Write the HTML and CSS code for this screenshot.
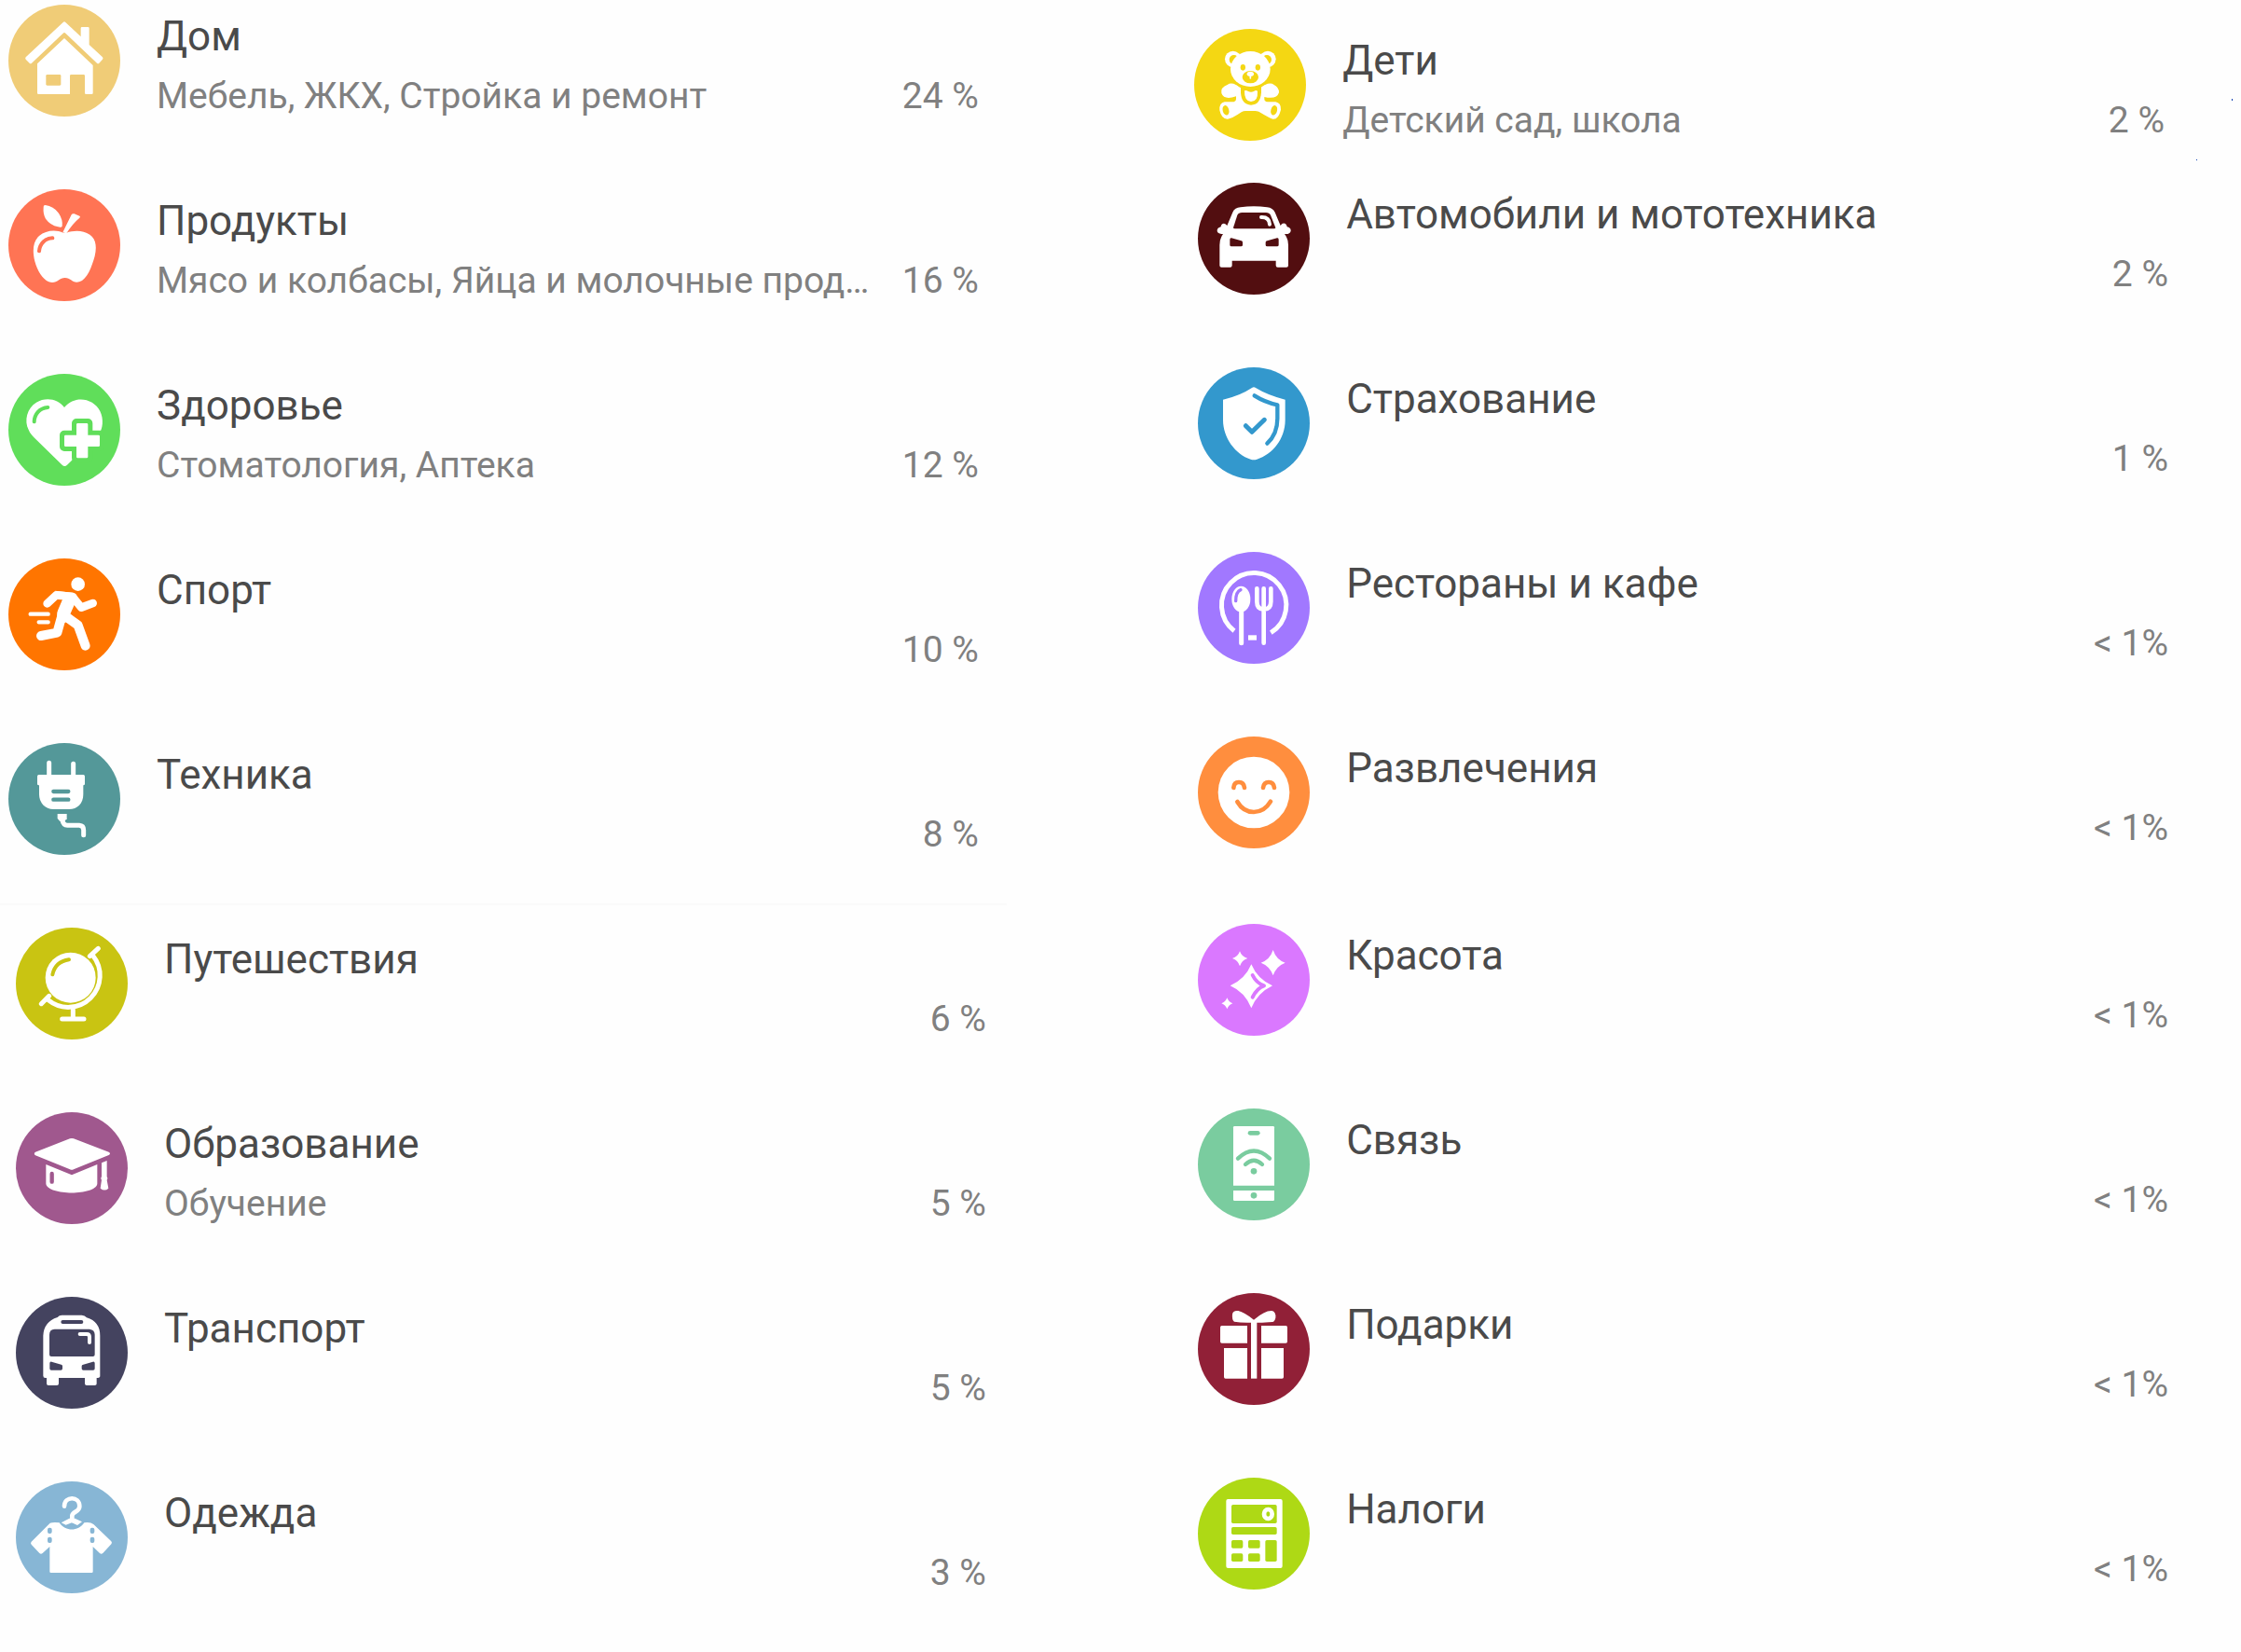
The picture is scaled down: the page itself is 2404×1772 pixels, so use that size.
FILE: index.html
```html
<!DOCTYPE html>
<html lang="ru">
<head>
    <meta charset="UTF-8">
    <meta name="viewport" content="width=device-width, initial-scale=1.0">
    <title>Категории расходов</title>
    <link rel="stylesheet" href="styles.css">
</head>
<body>
    <main class="page">
        <!-- Left column -->
        <div class="column">
            <ul class="group">
                <li class="row">
                    <svg class="icon home" viewBox="0 0 360 360" aria-hidden="true">
                        <path d="M176 57Q180 53 184 57L233 103V76q0-4 4-4h19q4 0 4 4v53L303 169Q306 173 303 176L292 188Q289 191 285 188L184 92Q180 88 176 92L75 188Q71 191 68 188L56 176Q53 173 56 169z"/>
                        <path d="M180 108L272 195V284q0 4-4 4H250q-4 0-4-4V229q0-4-4-4H202q-4 0-4 4V288H97q-4 0-4-4V190z"/>
                        <rect class="cut" x="121" y="225" width="48" height="35" rx="4"/>
                    </svg>
                    <div class="text">
                        <h2 class="title">Дом</h2>
                        <p class="sub">Мебель, ЖКХ, Стройка и ремонт</p>
                    </div>
                    <span class="percent">24 %</span>
                </li>
                <li class="row">
                    <svg class="icon food" viewBox="0 0 360 360" aria-hidden="true">
                        <path d="M177 140C150 128 118 134 100 149C78 168 77 200 85 232C93 262 110 290 130 298C156 306 162 285 182 285C202 285 205 303 228 298C254 290 268 250 278 215C285 185 282 160 262 146C240 131 210 132 187 140z"/>
                        <path d="M175 139L203 82Q206 77 212 79L229 86Q233 88 229 92Q205 112 187 142z"/>
                        <path d="M113 57Q112 51 119 51Q145 54 162 77Q176 98 173 119Q171 124 160 121Q135 116 120 95Q111 80 113 57z"/>
                        <path class="cut-line" stroke-width="12" d="M99 199C101 175 118 158 142 157"/>
                    </svg>
                    <div class="text">
                        <h2 class="title">Продукты</h2>
                        <p class="sub">Мясо и колбасы, Яйца и молочные прод…</p>
                    </div>
                    <span class="percent">16 %</span>
                </li>
                <li class="row">
                    <svg class="icon health" viewBox="0 0 360 360" aria-hidden="true">
                        <path d="M180 108C160 80 120 74 90 92C60 110 50 150 65 180C70 192 76 198 84 206L173 293Q181 301 189 293L290 195C305 178 307 145 295 120C275 80 215 66 180 108z"/>
                        <path class="cut" stroke="currentColor" stroke-width="30" stroke-linejoin="round" d="M219 159h37v38h38v37h-38v37h-37v-37h-39v-37h39z"/>
                        <path d="M223 159h29q4 0 4 4v34h34q4 0 4 4v29q0 4-4 4h-34v33q0 4-4 4h-29q-4 0-4-4v-33h-35q-4 0-4-4v-29q0-4 4-4h35v-34q0-4 4-4z"/>
                        <path class="cut-line" stroke-width="12" d="M83 154C84 130 100 110 127 108"/>
                    </svg>
                    <div class="text">
                        <h2 class="title">Здоровье</h2>
                        <p class="sub">Стоматология, Аптека</p>
                    </div>
                    <span class="percent">12 %</span>
                </li>
                <li class="row">
                    <svg class="icon sport" viewBox="0 0 360 360" aria-hidden="true">
                        <circle cx="224" cy="83" r="22"/>
                        <path d="M150 104L208 110Q218 112 222 122L212 150L199 179L212 190L180 208L160 196Q153 180 160 165L175 130z"/>
                        <path class="line" stroke-width="26" d="M125 145L154 118L206 123L235 158L272 144"/>
                        <path class="line" stroke-width="30" d="M172 185L157 239L105 249"/>
                        <path class="line" stroke-width="30" d="M178 182L224 215L248 281"/>
                        <path class="line" stroke-width="13" d="M71 179H128M98 205H128"/>
                    </svg>
                    <div class="text">
                        <h2 class="title">Спорт</h2>
                    </div>
                    <span class="percent">10 %</span>
                </li>
                <li class="row">
                    <svg class="icon tech" viewBox="0 0 360 360" aria-hidden="true">
                        <path class="line" stroke-width="15" d="M131 64V108M209 67V108"/>
                        <rect x="93" y="102" width="153" height="34" rx="5"/>
                        <path d="M99 130H241V165C241 195 222 213 195 213H145C118 213 99 192 99 165z"/>
                        <path class="cut-line" stroke-width="13" d="M145 156H193M145 182H193"/>
                        <path d="M158 228h30v16l-8 8h-14l-8-9z"/>
                        <path class="line" stroke-width="15" d="M173 245C175 258 180 265 190 265H228Q242 266 242 280V296"/>
                    </svg>
                    <div class="text">
                        <h2 class="title">Техника</h2>
                    </div>
                    <span class="percent">8 %</span>
                </li>
            </ul>
            <ul class="group group-second">
                <li class="row">
                    <svg class="icon travel" viewBox="0 0 360 360" aria-hidden="true">
                        <circle cx="176" cy="161" r="81"/>
                        <path class="cut-line" stroke-width="12" d="M118 151C124 124 144 107 171 103"/>
                        <path class="line" stroke-width="15" d="M248 90A102 102 0 0 1 104 233"/>
                        <path class="line" stroke-width="15" d="M238 92L265 67M82 245L107 220"/>
                        <path class="line" stroke-width="15" d="M184 265V290M149 294H219"/>
                    </svg>
                    <div class="text">
                        <h2 class="title">Путешествия</h2>
                    </div>
                    <span class="percent">6 %</span>
                </li>
                <li class="row">
                    <svg class="icon study" viewBox="0 0 360 360" aria-hidden="true">
                        <path d="M174 85Q180 83 186 85L299 128Q307 133 299 138L186 184Q180 187 174 184L63 139Q56 133 63 128z"/>
                        <path d="M97 168L180 202L262 168V230C258 269 102 269 97 230z"/>
                        <path class="cut-line" stroke-width="13" d="M116 198V224"/>
                        <path d="M276 163L293 156V208q4 5 0 10L298 245q-12 11-26 0L276 218q-4-5 0-10z"/>
                    </svg>
                    <div class="text">
                        <h2 class="title">Образование</h2>
                        <p class="sub">Обучение</p>
                    </div>
                    <span class="percent">5 %</span>
                </li>
                <li class="row">
                    <svg class="icon transport" viewBox="0 0 360 360" aria-hidden="true">
                        <path d="M134 66Q140 59 148 59H212Q222 59 228 67Q271 80 271 125V255Q271 261 260 261V280Q260 285 254 285H228Q222 285 222 279V261H138V279q0 6-6 6H105q-6 0-6-6V261H95q-7 0-7-7V125Q90 80 134 66z"/>
                        <path class="cut-line" stroke-width="12" d="M151 81H211"/>
                        <path class="cut" d="M125 104H237Q254 106 254 122V186q0 6-6 6H114q-6 0-6-6V122Q108 104 125 104z"/>
                        <path class="line" stroke-width="12" d="M206 120H228Q237 120 237 130V147"/>
                        <path class="cut" d="M115 209L146 218Q150 219 150 223V231q0 5-5 5H114q-5 0-5-5V214Q109 208 115 209z"/>
                        <path class="cut" d="M248 209L217 218Q212 219 212 223V231q0 5 5 5H249q5 0 5-5V214Q254 208 248 209z"/>
                    </svg>
                    <div class="text">
                        <h2 class="title">Транспорт</h2>
                    </div>
                    <span class="percent">5 %</span>
                </li>
                <li class="row">
                    <svg class="icon clothes" viewBox="0 0 360 360" aria-hidden="true">
                        <path d="M110 134Q120 131 140 133C160 162 200 162 220 133Q240 130 250 138L307 193Q311 198 307 202L280 231Q275 236 270 231L248 210V290q0 4-4 4H113q-4 0-4-4V210L86 231Q81 236 76 231L50 203Q46 198 50 194z"/>
                        <path class="line" stroke-width="14" d="M156 80C157 46 205 47 205 80C205 99 183 96 181 110V126"/>
                        <path d="M146 133L172 119H190L213 130L198 141L180 133L161 140z"/>
                        <rect class="cut" x="102" y="149" width="14" height="19" rx="6"/>
                        <rect class="cut" x="102" y="179" width="14" height="19" rx="6"/>
                        <rect class="cut" x="239" y="149" width="14" height="19" rx="6"/>
                        <rect class="cut" x="239" y="179" width="14" height="19" rx="6"/>
                    </svg>
                    <div class="text">
                        <h2 class="title">Одежда</h2>
                    </div>
                    <span class="percent">3 %</span>
                </li>
            </ul>
        </div>

        <!-- Right column -->
        <div class="column column-right">
            <ul class="group group-kids">
                <li class="row">
                    <svg class="icon kids" viewBox="0 0 360 360" aria-hidden="true">
                        <path d="M108 179Q118 172 135 180L152 186H212L228 180Q246 172 256 179Q274 188 273 205Q266 228 226 219V226Q226 234 236 235H262Q280 238 279 260Q272 291 254 290Q248 290 208 266Q200 263 192 264H168Q160 263 152 268Q120 290 108 290Q88 291 82 262Q80 238 98 235H128Q135 234 135 226V217Q96 230 88 207Q84 188 108 179z"/>
                        <ellipse class="cut" cx="181" cy="129" rx="69" ry="68"/>
                        <path class="cut" d="M150 180H216V205Q213 245 183 245Q152 244 150 205z"/>
                        <path d="M162 199Q168 197 174 201Q183 205 192 201Q199 196 204 200Q206 234 183 234Q161 233 162 199z"/>
                        <ellipse class="cut" cx="102" cy="262" rx="10" ry="16" transform="rotate(-15 102 262)"/>
                        <ellipse class="cut" cx="257" cy="262" rx="10" ry="16" transform="rotate(15 257 262)"/>
                        <circle cx="125" cy="97" r="26"/>
                        <circle cx="237" cy="97" r="26"/>
                        <circle class="cut" cx="128" cy="99" r="15"/>
                        <circle class="cut" cx="234" cy="99" r="15"/>
                        <ellipse cx="181" cy="129" rx="64" ry="57"/>
                        <ellipse class="cut" cx="157" cy="124" rx="8" ry="10"/>
                        <ellipse class="cut" cx="205" cy="124" rx="8" ry="10"/>
                        <ellipse class="cut" cx="181" cy="155" rx="26" ry="20"/>
                        <ellipse cx="181" cy="145" rx="11" ry="8"/>
                        <path class="line" stroke-width="5" d="M181 150V159"/>
                    </svg>
                    <div class="text">
                        <h2 class="title">Дети</h2>
                        <p class="sub">Детский сад, школа</p>
                    </div>
                    <span class="percent">2 %</span>
                </li>
            </ul>
            <ul class="group group-auto">
                <li class="row">
                    <svg class="icon auto" viewBox="0 0 360 360" aria-hidden="true">
                        <path d="M94 138L112 95Q119 80 137 79Q180 73 223 79Q241 81 248 95L266 138Q272 128 282 132Q287 138 287 142Q300 145 299 155Q297 165 283 165H279Q291 180 291 200V266q0 6-6 6H257q-6 0-6-6V251H110V266q0 6-6 6H76q-6 0-6-6V200Q70 180 81 165H76Q62 164 62 154Q62 145 74 142Q75 131 84 131Q90 132 94 138z"/>
                        <path class="cut" d="M114 145L127 104Q131 96 142 96H219Q230 96 234 104L250 145Q250 148 245 148H119Q114 148 114 145z"/>
                        <path class="line" stroke-width="12" d="M204 111Q230 110 231 134"/>
                        <path class="cut" d="M108 178L140 187Q144 188 144 192V200q0 5-5 5H108q-5 0-5-5V183Q103 177 108 178z"/>
                        <path class="cut" d="M255 178L223 187Q218 188 218 192V200q0 5 5 5H255q5 0 5-5V183Q260 177 255 178z"/>
                    </svg>
                    <div class="text">
                        <h2 class="title">Автомобили и мототехника</h2>
                    </div>
                    <span class="percent">2 %</span>
                </li>
                <li class="row">
                    <svg class="icon insurance" viewBox="0 0 360 360" aria-hidden="true">
                        <path d="M174 66Q180 61 186 66Q225 90 281 104V170C281 230 240 280 190 296Q180 299 170 296C120 280 81 225 81 170V104Q135 92 174 66z"/>
                        <path class="cut-line" stroke-width="13" d="M182 91Q215 112 256 121V165Q256 215 223 245"/>
                        <path class="cut-line" stroke-width="15" d="M154 188L174 208L214 169"/>
                    </svg>
                    <div class="text">
                        <h2 class="title">Страхование</h2>
                    </div>
                    <span class="percent">1 %</span>
                </li>
                <li class="row">
                    <svg class="icon cafe" viewBox="0 0 360 360" aria-hidden="true">
                        <path class="line butt" stroke-width="15" d="M117 254A104 104 0 1 1 235 260"/>
                        <ellipse cx="139" cy="152" rx="30" ry="42"/>
                        <path class="line" stroke-width="15" d="M140 185V293"/>
                        <path class="cut-line" stroke-width="10" d="M122 158C122 140 128 126 138 122"/>
                        <path class="line" stroke-width="14" d="M190 118V160Q190 185 212 185Q235 185 235 160V118M212 118V293"/>
                        <rect x="162" y="268" width="27" height="16"/>
                    </svg>
                    <div class="text">
                        <h2 class="title">Рестораны и кафе</h2>
                    </div>
                    <span class="percent">&lt; 1%</span>
                </li>
                <li class="row">
                    <svg class="icon fun" viewBox="0 0 360 360" aria-hidden="true">
                        <circle cx="180" cy="180" r="115"/>
                        <path class="cut-line" stroke-width="14" d="M115 165Q116 147 132 147Q148 147 150 165M210 165Q212 147 228 147Q244 147 246 165"/>
                        <path class="cut-line" stroke-width="14" d="M127 210Q146 243 180 243Q214 243 234 209"/>
                    </svg>
                    <div class="text">
                        <h2 class="title">Развлечения</h2>
                    </div>
                    <span class="percent">&lt; 1%</span>
                </li>
            </ul>
            <ul class="group group-beauty">
                <li class="row">
                    <svg class="icon beauty" viewBox="0 0 360 360" aria-hidden="true">
                        <path d="M172 130Q192 178 240 199Q192 222 172 271Q152 220 104 199Q152 178 172 130z"/>
                        <path class="cut-line" stroke-width="12" d="M176 165Q188 190 213 199Q190 207 176 236"/>
                        <path d="M242 84Q252 115 281 125Q252 136 242 166Q232 136 203 125Q232 115 242 84z"/>
                        <path d="M135 88Q141 106 160 111Q141 117 135 136Q129 117 111 111Q129 106 135 88z"/>
                        <path d="M94 238Q99 251 112 256Q99 261 94 274Q89 261 76 256Q89 251 94 238z"/>
                    </svg>
                    <div class="text">
                        <h2 class="title">Красота</h2>
                    </div>
                    <span class="percent">&lt; 1%</span>
                </li>
                <li class="row">
                    <svg class="icon phone" viewBox="0 0 360 360" aria-hidden="true">
                        <path d="M118 57H242q4 0 4 4V248H114V61q0-4 4-4z"/>
                        <path d="M114 264H246V293q0 4-4 4H118q-4 0-4-4z"/>
                        <path class="cut-line" stroke-width="14" d="M168 79H193"/>
                        <path class="cut-line" stroke-width="13" d="M129 161Q180 112 231 161M153 180Q180 154 207 180"/>
                        <circle class="cut" cx="180" cy="202" r="10"/>
                        <circle class="cut" cx="180" cy="280" r="10"/>
                    </svg>
                    <div class="text">
                        <h2 class="title">Связь</h2>
                    </div>
                    <span class="percent">&lt; 1%</span>
                </li>
                <li class="row">
                    <svg class="icon gifts" viewBox="0 0 360 360" aria-hidden="true">
                        <path d="M180 86Q215 56 238 57Q252 60 250 80Q247 92 240 93Q205 96 190 95H171Q140 96 117 92Q109 85 111 68Q113 55 130 57Q150 62 180 86z"/>
                        <rect x="171" y="88" width="19" height="187"/>
                        <path d="M77 105H159V161H77q-5 0-5-5V110q0-5 5-5z"/>
                        <path d="M204 105H283q5 0 5 5V156q0 5-5 5H204z"/>
                        <path d="M84 177H159V275H89q-5 0-5-5z"/>
                        <path d="M204 177H276V270q0 5-5 5H204z"/>
                    </svg>
                    <div class="text">
                        <h2 class="title">Подарки</h2>
                    </div>
                    <span class="percent">&lt; 1%</span>
                </li>
                <li class="row">
                    <svg class="icon taxes" viewBox="0 0 360 360" aria-hidden="true">
                        <rect x="91" y="69" width="181" height="222" rx="6"/>
                        <rect class="cut" x="108" y="87" width="146" height="60" rx="5"/>
                        <rect class="cut" x="108" y="159" width="146" height="24" rx="5"/>
                        <rect class="cut" x="108" y="201" width="37" height="26" rx="5"/>
                        <rect class="cut" x="162" y="201" width="38" height="26" rx="5"/>
                        <rect class="cut" x="108" y="244" width="37" height="26" rx="5"/>
                        <rect class="cut" x="162" y="244" width="38" height="26" rx="5"/>
                        <rect class="cut" x="217" y="201" width="37" height="69" rx="5"/>
                        <ellipse class="line" stroke-width="14" cx="226" cy="117" rx="13" ry="15"/>
                    </svg>
                    <div class="text">
                        <h2 class="title">Налоги</h2>
                    </div>
                    <span class="percent">&lt; 1%</span>
                </li>
            </ul>
            <span class="speck speck-top"></span>
            <span class="speck speck-bottom"></span>
        </div>
    </main>
</body>
</html>
```
FILE: styles.css
```css
* {
    box-sizing: border-box;
}
body {
    margin: 0;
    background: #fefefe;
    font-family: Roboto, "Noto Sans", sans-serif;
    color: #4a4a4a;
}
.page {
    display: grid;
    grid-template-columns: 1080fr 1132fr;
    column-gap: 8%;
}
.column {
    min-width: 0;
}
.column-right {
    position: relative;
}

/* Lists of categories */
.group {
    display: flex;
    flex-direction: column;
    gap: 70px;
    margin: 0;
    padding: 5px 30px 0 9px;
    list-style: none;
}
.group-second {
    margin-top: 44px;
    padding: 24px 22px 0 17px;
    border-top: 2px solid #fafafa;
}
.group-kids {
    padding: 31px 82px 0 9px;
}
.group-auto {
    margin-top: 37px;
    padding: 0 78px 0 13px;
}
.group-beauty {
    margin-top: 73px;
    padding: 0 78px 0 13px;
}

/* One category */
.row {
    display: flex;
    min-height: 128px;
}
.text {
    flex: 1;
    min-width: 0;
    padding-top: 4px;
    margin-left: 39px;
}
.title {
    margin: 0 0 4px;
    font-size: 44px;
    font-weight: 400;
    line-height: 60px;
}
.sub {
    margin: 0;
    overflow: hidden;
    white-space: nowrap;
    text-overflow: ellipsis;
    font-size: 39px;
    line-height: 60px;
    color: #808080;
}
.percent {
    align-self: flex-end;
    margin-left: 24px;
    font-size: 39px;
    line-height: 60px;
    white-space: nowrap;
    color: #808080;
}

/* Round icons: white drawing, details cut in the circle colour */
.icon {
    flex: none;
    width: 120px;
    height: 120px;
    border-radius: 50%;
    background: currentColor;
    fill: #fff;
}
.cut {
    fill: currentColor;
}
.line,
.cut-line {
    fill: none;
    stroke: #fff;
    stroke-linecap: round;
    stroke-linejoin: round;
}
.cut-line {
    stroke: currentColor;
}
.butt {
    stroke-linecap: butt;
}

.home { color: #f0cc77; }
.food { color: #ff7454; }
.health { color: #60de5a; }
.sport { color: #ff7500; }
.tech { color: #549899; }
.travel { color: #c9c412; }
.study { color: #a0588e; }
.transport { color: #44435f; }
.clothes { color: #87b6d5; }
.kids { color: #f4d713; }
.auto { color: #520e10; }
.insurance { color: #3398cd; }
.cafe { color: #a178ff; }
.fun { color: #ff8e3e; }
.beauty { color: #da78ff; }
.phone { color: #7acc9f; }
.gifts { color: #912037; }
.taxes { color: #aed915; }

/* Tiny blue marks near the right edge */
.speck {
    position: absolute;
    width: 1px;
    background: #0a3fb0;
}
.speck-top {
    top: 106px;
    right: 9px;
    height: 2px;
}
.speck-bottom {
    top: 171px;
    right: 47px;
    height: 1px;
}
```
